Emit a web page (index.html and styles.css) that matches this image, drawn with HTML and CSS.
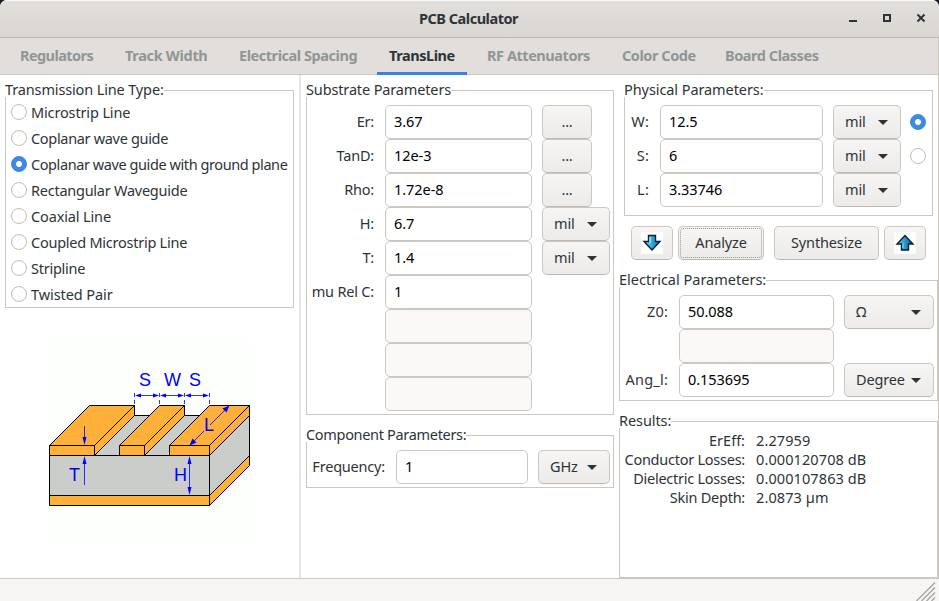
FILE: index.html
```html
<!DOCTYPE html>
<html lang="en">
<head>
<meta charset="utf-8">
<title>PCB Calculator</title>
<link rel="stylesheet" href="styles.css">
</head>
<body>
<div class="window">
  <header class="titlebar">
    <h1>PCB Calculator</h1>
    <div class="controls">
      <svg viewBox="0 0 10 10"><path d="M1 8h8" stroke-width="2"/></svg>
      <svg viewBox="0 0 10 10"><path d="M2 2h6v6h-6z" stroke-width="2"/></svg>
      <svg viewBox="0 0 10 10"><path d="M1.500 1.500l7 7M8.500 1.500l-7 7" stroke-width="2"/></svg>
    </div>
  </header>
  <nav class="tabs">
    <span class="tab tight t1">Regulators</span>
    <span class="tab loose t2">Track Width</span>
    <span class="tab t3">Electrical Spacing</span>
    <span class="tab active t4">TransLine</span>
    <span class="tab t5">RF Attenuators</span>
    <span class="tab t6">Color Code</span>
    <span class="tab t7">Board Classes</span>
  </nav>
  <main>
    <section class="col types">
      <div class="group type-group">
        <span class="legend s2">Transmission Line Type:</span>
        <label class="option"><i class="radio"></i><span class="s2">Microstrip Line</span></label>
        <label class="option"><i class="radio"></i><span class="s3">Coplanar wave guide</span></label>
        <label class="option"><i class="radio on"></i><span class="s4">Coplanar wave guide with ground plane</span></label>
        <label class="option"><i class="radio"></i><span>Rectangular Waveguide</span></label>
        <label class="option"><i class="radio"></i><span class="s2">Coaxial Line</span></label>
        <label class="option"><i class="radio"></i><span>Coupled Microstrip Line</span></label>
        <label class="option"><i class="radio"></i><span>Stripline</span></label>
        <label class="option"><i class="radio"></i><span class="s1">Twisted Pair</span></label>
      </div>
      <svg class="diagram" viewBox="48 341 203 203">
        <rect class="paper" x="48" y="341" width="203" height="203"/>
        <g class="solid">
          <path class="board" d="M49.500 455.500H209.500V495.500H49.500zM209.500 455.500L249.500 415.500V455.500L209.500 495.500z"/>
          <path class="board" d="M94.500 455.500L134.500 415.500H150L119.500 445.500V455.500zM144.500 455.500L184.500 415.500H200L169.500 445.500V455.500z"/>
          <path d="M49.500 495.500H209.500V505.500H49.500zM209.500 495.500L249.500 455.500V465.500L209.500 505.500z"/>
          <path d="M49.500 445.500L89.500 405.500H134.500L94.500 445.500zM94.500 445.500L134.500 405.500V415.500L94.500 455.500zM49.500 445.500H94.500V455.500H49.500z"/>
          <path d="M119.500 445.500L159.500 405.500H184.500L144.500 445.500zM144.500 445.500L184.500 405.500V415.500L144.500 455.500zM119.500 445.500H144.500V455.500H119.500z"/>
          <path d="M169.500 445.500L209.500 405.500H249.500L209.500 445.500zM209.500 445.500L249.500 405.500V415.500L209.500 455.500zM169.500 445.500H209.500V455.500H169.500z"/>
        </g>
        <g class="dims">
          <path class="ticks" d="M134.500 393v12M159.500 393v12M184.500 393v12M209.500 393v12"/>
          <path class="wires" d="M137 395.500H157M162 395.500H182M187 395.500H207M84.500 426V442M84.500 485V459M189.500 459V493M227 408L210 425M204 431L192 443"/>
          <path class="heads" d="M135 395.500l6-2v4zM159 395.500l-6-2v4zM160 395.500l6-2v4zM184 395.500l-6-2v4zM185 395.500l6-2v4zM209 395.500l-6-2v4zM84.500 445l-2-8h4zM84.500 456l-2 8h4zM189.500 456l-2 8h4zM189.500 495l-2-8h4zM229.500 405.500l-3 7-4-4zM189.500 445.500l3-7 4 4z"/>
        </g>
        <g class="marks">
          <text x="145" y="386">S</text><text x="172.500" y="386">W</text><text x="195" y="386">S</text>
          <text x="74.500" y="481">T</text><text x="180.500" y="481">H</text><text x="209" y="431">L</text>
        </g>
      </svg>
    </section>

    <section class="col inputs">
      <div class="group substrate">
        <span class="legend s2">Substrate Parameters</span>
        <div class="row"><label>Er:</label><span class="field">3.67</span><span class="btn dots">...</span></div>
        <div class="row"><label>TanD:</label><span class="field">12e-3</span><span class="btn dots">...</span></div>
        <div class="row"><label>Rho:</label><span class="field">1.72e-8</span><span class="btn dots">...</span></div>
        <div class="row"><label>H:</label><span class="field">6.7</span><span class="btn drop">mil</span></div>
        <div class="row"><label>T:</label><span class="field">1.4</span><span class="btn drop">mil</span></div>
        <div class="row"><label>mu Rel C:</label><span class="field">1</span></div>
        <div class="row"><label></label><span class="field off"></span></div>
        <div class="row"><label></label><span class="field off"></span></div>
        <div class="row"><label></label><span class="field off"></span></div>
      </div>
      <div class="group component">
        <span class="legend s3">Component Parameters:</span>
        <div class="row"><label>Frequency:</label><span class="field">1</span><span class="btn drop">GHz</span></div>
      </div>
    </section>

    <section class="col outputs">
      <div class="group physical">
        <span class="legend s1">Physical Parameters:</span>
        <div class="row"><label>W:</label><span class="field">12.5</span><span class="btn drop">mil</span><i class="radio on"></i></div>
        <div class="row"><label>S:</label><span class="field">6</span><span class="btn drop">mil</span><i class="radio"></i></div>
        <div class="row"><label>L:</label><span class="field">3.33746</span><span class="btn drop">mil</span></div>
      </div>
      <div class="actions">
        <span class="btn icon"><svg viewBox="0 0 22 22"><defs><linearGradient id="aqua"><stop offset="0" stop-color="#7fd8ea"/><stop offset=".45" stop-color="#35b3d8"/><stop offset="1" stop-color="#0a6ea6"/></linearGradient></defs><rect width="22" height="22" fill="#fdfffc"/><path d="M7.500 3.500h7v6h4.500l-8 8.500-8-8.500h4.500z" fill="url(#aqua)" stroke="#0a1c44" stroke-width="1.400"/><path d="M9 5v6" stroke="#d9f7fb"/></svg></span>
        <span class="btn analyze"><span class="focus">Analyze</span></span>
        <span class="btn synth">Synthesize</span>
        <span class="btn icon"><svg viewBox="0 0 22 22"><defs><linearGradient id="azure"><stop offset="0" stop-color="#6ccbe4"/><stop offset=".45" stop-color="#2a9ecb"/><stop offset="1" stop-color="#07578f"/></linearGradient></defs><rect width="22" height="22" fill="#fdfffc"/><path d="M7.500 18h7v-6h4.500l-8-8.500-8 8.500h4.500z" fill="url(#azure)" stroke="#0a1c44" stroke-width="1.400"/><path d="M9 11v5" stroke="#8fdcec"/></svg></span>
      </div>
      <div class="group electrical">
        <span class="legend s0">Electrical Parameters:</span>
        <div class="row"><label>Z0:</label><span class="field">50.088</span><span class="btn drop">Ω</span></div>
        <div class="row"><label></label><span class="field off"></span></div>
        <div class="row"><label>Ang_l:</label><span class="field">0.153695</span><span class="btn drop">Degree</span></div>
      </div>
      <div class="group results">
        <span class="legend s1">Results:</span>
        <dl>
          <dt class="s0">ErEff:</dt><dd>2.27959</dd>
          <dt>Conductor Losses:</dt><dd>0.000120708 dB</dd>
          <dt>Dielectric Losses:</dt><dd>0.000107863 dB</dd>
          <dt>Skin Depth:</dt><dd>2.0873 µm</dd>
        </dl>
      </div>
    </section>
  </main>
  <footer><svg viewBox="0 0 20 20"><path d="M0.500 20L19 1.500M5.500 20L19 6.500M10.500 20L19 11.500M15.500 20L19 16.500"/></svg></footer>
</div>
</body>
</html>
```
FILE: styles.css
```css
* { box-sizing: border-box; }
body {
  margin: 0;
  background: #1b1c26;
  font: 14.5px/20px "Noto Sans", sans-serif;
  letter-spacing: -0.25px;
  color: #2e3436;
}
.window {
  width: 939px;
  height: 601px;
  display: flex;
  flex-direction: column;
  background: #fff;
  border-radius: 7px 7px 0 0;
  overflow: hidden;
}
.s0 { letter-spacing: 0; }
.s1 { letter-spacing: -0.08px; }
.s2 { letter-spacing: -0.14px; }
.s3 { letter-spacing: -0.32px; }
.s4 { letter-spacing: -0.42px; }

.titlebar {
  height: 38px;
  flex: none;
  display: grid;
  grid-template-columns: 1fr auto 1fr;
  align-items: center;
  padding: 0 13px 2px 12px;
  background: linear-gradient(#e1dedb, #dad6d2);
  border-top: 1px solid #f8f7f7;
  border-bottom: 2px solid #bfb8b1;
  border-bottom: 1px solid #bfb8b1;
}
.titlebar h1 {
  grid-column: 2;
  margin: 0 1px 0 0;
  font-size: 14.5px;
  font-weight: 700;
  letter-spacing: -0.48px;
}
.controls { justify-self: end; display: flex; gap: 24px; }
.controls svg { width: 10px; height: 10px; fill: none; stroke: #2e3436; }

.tabs {
  height: 37px;
  flex: none;
  display: flex;
  gap: 8px;
  padding-left: 8px;
  background: #e1dedb;
  border-bottom: 1px solid #cdc7c2;
  border-right: 1px solid #cdc7c2;
}
.tab {
  height: 37px;
  padding: 7px 0 0 12px;
  white-space: nowrap;
  font-weight: 700;
  letter-spacing: -0.45px;
  color: #929595;
}
.tab.tight { letter-spacing: -0.58px; }
.tab.loose { letter-spacing: -0.32px; }
.tab.active { color: #2e3436; border-bottom: 3px solid #3584e4; }
.t1 { width: 97px; }
.t2 { width: 106px; }
.t3 { width: 142px; }
.t4 { width: 90px; }
.t5 { width: 127px; }
.t6 { width: 95px; }
.t7 { width: 117px; }

main { flex: 1; display: flex; border-right: 1px solid #cdc7c2; min-height: 0; }
.col { padding-top: 15px; display: flex; flex-direction: column; }
.types { width: 301px; padding-left: 5px; border-right: 2px solid #e6e6e6; }
.inputs { width: 318px; padding-left: 5px; }
.outputs { width: 319px; }

.group { border: 1px solid #cdc7c2; flex: none; }
.legend {
  display: block;
  width: max-content;
  height: 14px;
  line-height: 12px;
  margin: -8px 0 0 -1px;
  background: #fff;
}
.row { display: flex; height: 34px; }
.row label { text-align: right; line-height: 33px; white-space: nowrap; letter-spacing: -0.2px; }
.field {
  height: 34px;
  border: 1px solid #cdc7c2;
  border-radius: 5px;
  background: #fff;
  padding-left: 8px;
  line-height: 31px;
  color: #000;
  letter-spacing: -0.05px;
}
.field.off { background: #faf9f8; }
.btn {
  height: 34px;
  margin-left: 10px;
  border: 1px solid #cdc7c2;
  border-bottom-color: #bfb8b1;
  border-radius: 5px;
  background: linear-gradient(#f6f5f4, #edebe9);
  line-height: 31px;
  text-align: center;
  letter-spacing: -0.15px;
}
.dots { width: 50px; }
.drop {
  width: 68px;
  display: flex;
  justify-content: space-between;
  padding: 0 12px 0 11px;
}
.drop::after {
  content: "";
  width: 10px;
  height: 5px;
  background: #2e3436;
  clip-path: polygon(0 0, 100% 0, 50% 100%);
  margin-top: 14px;
}
.radio {
  width: 16px;
  height: 16px;
  flex: none;
  border: 1px solid #c3bcb6;
  border-radius: 50%;
  background: #fff;
}
.radio.on {
  border-color: #3584e4;
  background: radial-gradient(circle, #fff 2.6px, #3d89e5 3.3px);
}

.type-group { width: 289px; height: 218px; }
.option { display: flex; height: 26px; align-items: center; padding-left: 5px; gap: 4px; white-space: nowrap; }
.type-group .legend { margin-bottom: 2px; }
.option .radio { margin-top: -1px; }

.diagram { width: 203px; height: 203px; margin: 33px 0 0 43px; }
.paper { fill: #fdfffc; }
.solid { fill: #ffb03b; stroke: #000; stroke-width: 1; stroke-linejoin: round; }
.solid .board { fill: #cbcdca; }
.wires { fill: none; stroke: #00f; stroke-width: .8; }
.ticks { fill: none; stroke: #00f; stroke-width: .8; stroke-dasharray: 4 3; }
.heads { fill: #00f; }
.marks { font: 18px "Liberation Sans", sans-serif; letter-spacing: 0; fill: #00f; text-anchor: middle; }

.substrate { width: 308px; height: 325px; }
.substrate .legend, .physical .legend, .electrical .legend, .component .legend { margin-bottom: 8px; }
.substrate label { width: 67px; margin-right: 11px; }
.substrate .field { width: 147px; }
.component { width: 308px; height: 53px; margin-top: 20px; }
.component label { width: 78px; margin-right: 11px; }
.component .field { width: 132px; }
.component .drop { width: 72px; }

.physical { width: 309px; height: 126px; margin-left: 5px; }
.physical label { width: 24px; margin-right: 11px; letter-spacing: 0.2px; }
.physical .field { width: 163px; }
.physical .radio { margin: 9px 0 0 9px; }
.actions { display: flex; height: 34px; margin: 10px 0 20px 12px; }
.actions .btn { margin: 0; }
.actions .icon { width: 42px; padding-top: 5px; line-height: 0; }
.actions svg { width: 22px; height: 22px; }
.actions .analyze { width: 86px; margin: 0 10px 0 5px; padding: 1px; }
.focus { display: block; height: 30px; line-height: 27px; border: 1px dotted #99958f; border-radius: 3px; }
.actions .synth { width: 105px; margin-right: 5px; }
.electrical { width: 319px; height: 121px; }
.electrical label { width: 48px; margin-right: 11px; letter-spacing: 0.2px; }
.electrical .field { width: 155px; }
.electrical .drop { width: 90px; }
.results { width: 319px; height: 157px; margin-top: 20px; }
.results dl {
  display: grid;
  grid-template-columns: 125px auto;
  column-gap: 11px;
  grid-auto-rows: 19px;
  line-height: 19px;
  margin: 3px 0 0;
}
dt { text-align: right; white-space: nowrap; }
dd { margin: 0; letter-spacing: 0.1px; }

footer {
  height: 23px;
  flex: none;
  border-top: 1px solid #cdc7c2;
  background: #f6f5f4;
  display: flex;
  justify-content: flex-end;
  padding: 2px 3px 0 0;
}
footer svg { width: 20px; height: 20px; fill: none; stroke: #a9a6a1; stroke-width: 1.4; }
```
